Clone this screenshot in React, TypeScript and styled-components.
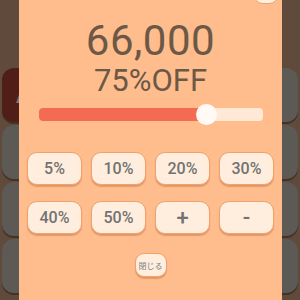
import React, { useState } from 'react';
import styled, { createGlobalStyle } from 'styled-components';

const GlobalStyle = createGlobalStyle`
  html, body {
    margin: 0;
    padding: 0;
    width: 300px;
    height: 300px;
    overflow: hidden;
    font-family: Roboto, "Noto Sans CJK JP", sans-serif;
  }
`;

const Screen = styled.div`
  position: relative;
  width: 300px;
  height: 300px;
  overflow: hidden;
  background: #5f4a3c;
`;

const KeyGrid = styled.div`
  display: grid;
  grid-template-columns: repeat(4, 1fr);
  grid-auto-rows: 54px;
  gap: 3px 4px;
  padding: 68px 2px 0;
`;

const Key = styled.div<{ $tone?: 'red' | 'gray' }>`
  border-radius: 12px;
  background: ${p => (p.$tone === 'red' ? '#4e1e17' : '#5d5955')};
  box-shadow: 0 2px 0 rgba(40, 25, 15, 0.5);
  color: #7a7672;
  font-size: 22px;
  font-weight: 700;
  display: flex;
  align-items: center;
  padding-left: 14px;
`;

const Dialog = styled.div`
  position: absolute;
  left: 19px;
  top: -30px;
  width: 263px;
  height: 380px;
  background: #ffbc8d;
  box-sizing: border-box;
  padding-top: 50px;
  display: flex;
  flex-direction: column;
  align-items: center;
`;

const CornerButton = styled.div`
  position: absolute;
  right: 3px;
  top: 4px;
  width: 26px;
  height: 30px;
  border-radius: 10px;
  background: #fff0e0;
  border: 1px solid #eea26c;
  box-sizing: border-box;
`;

const Price = styled.div`
  font-size: 42px;
  line-height: 42px;
  color: #6b5846;
  letter-spacing: 0.5px;
`;

const Discount = styled.div`
  margin-top: 3px;
  font-size: 31px;
  line-height: 32px;
  color: #6b5846;
`;

const SliderWrap = styled.div`
  position: relative;
  margin-top: 7px;
  width: 224px;
  height: 21px;
  display: flex;
  align-items: center;
`;

const Track = styled.div`
  width: 100%;
  height: 13px;
  border-radius: 4px;
  background: #ffe8d6;
  overflow: hidden;
`;

const Fill = styled.div`
  height: 100%;
  background: #f26b52;
`;

const Thumb = styled.div`
  position: absolute;
  top: 0;
  width: 21px;
  height: 21px;
  margin-left: -10.5px;
  border-radius: 50%;
  background: #fffaf5;
`;

const ButtonGrid = styled.div`
  margin-top: 27px;
  display: grid;
  grid-template-columns: repeat(4, 55px);
  grid-auto-rows: 33px;
  gap: 16px 9px;
`;

const RateButton = styled.button<{ $big?: boolean }>`
  border: 1.5px solid #eea26c;
  border-radius: 10px;
  background: #ffeedd;
  box-shadow: 0 1.5px 1px rgba(190, 110, 60, 0.45);
  color: #727272;
  font-family: Roboto, sans-serif;
  font-size: ${p => (p.$big ? '22px' : '16px')};
  font-weight: 500;
  padding: 0;
`;

const CloseButton = styled.button`
  margin-top: 19px;
  width: 32px;
  height: 24px;
  border: 1.5px solid #eea26c;
  border-radius: 9px;
  background: #ffeedd;
  box-shadow: 0 1.5px 1px rgba(190, 110, 60, 0.45);
  color: #808080;
  font-family: Roboto, "Noto Sans CJK JP", sans-serif;
  font-size: 8px;
  padding: 0;
`;

const labels = ['5%', '10%', '20%', '30%', '40%', '50%', '+', '-'];

const App: React.FC = () => {
  const [rate] = useState(75);
  const base = 264000;
  const price = Math.round(base * (100 - rate) / 100);

  return (
    <Screen>
      <GlobalStyle />
      <KeyGrid>
        <Key $tone="red">AC</Key>
        {Array.from({ length: 3 }).map((_, i) => <Key key={'r' + i} />)}
        {Array.from({ length: 12 }).map((_, i) => <Key key={i} />)}
      </KeyGrid>
      <Dialog>
        <CornerButton />
        <Price>{price.toLocaleString('en-US')}</Price>
        <Discount>{rate}%OFF</Discount>
        <SliderWrap>
          <Track>
            <Fill style={{ width: `${rate}%` }} />
          </Track>
          <Thumb style={{ left: `${rate}%` }} />
        </SliderWrap>
        <ButtonGrid>
          {labels.map(l => (
            <RateButton key={l} $big={l === '+' || l === '-'}>{l}</RateButton>
          ))}
        </ButtonGrid>
        <CloseButton>閉じる</CloseButton>
      </Dialog>
    </Screen>
  );
};

export default App;
